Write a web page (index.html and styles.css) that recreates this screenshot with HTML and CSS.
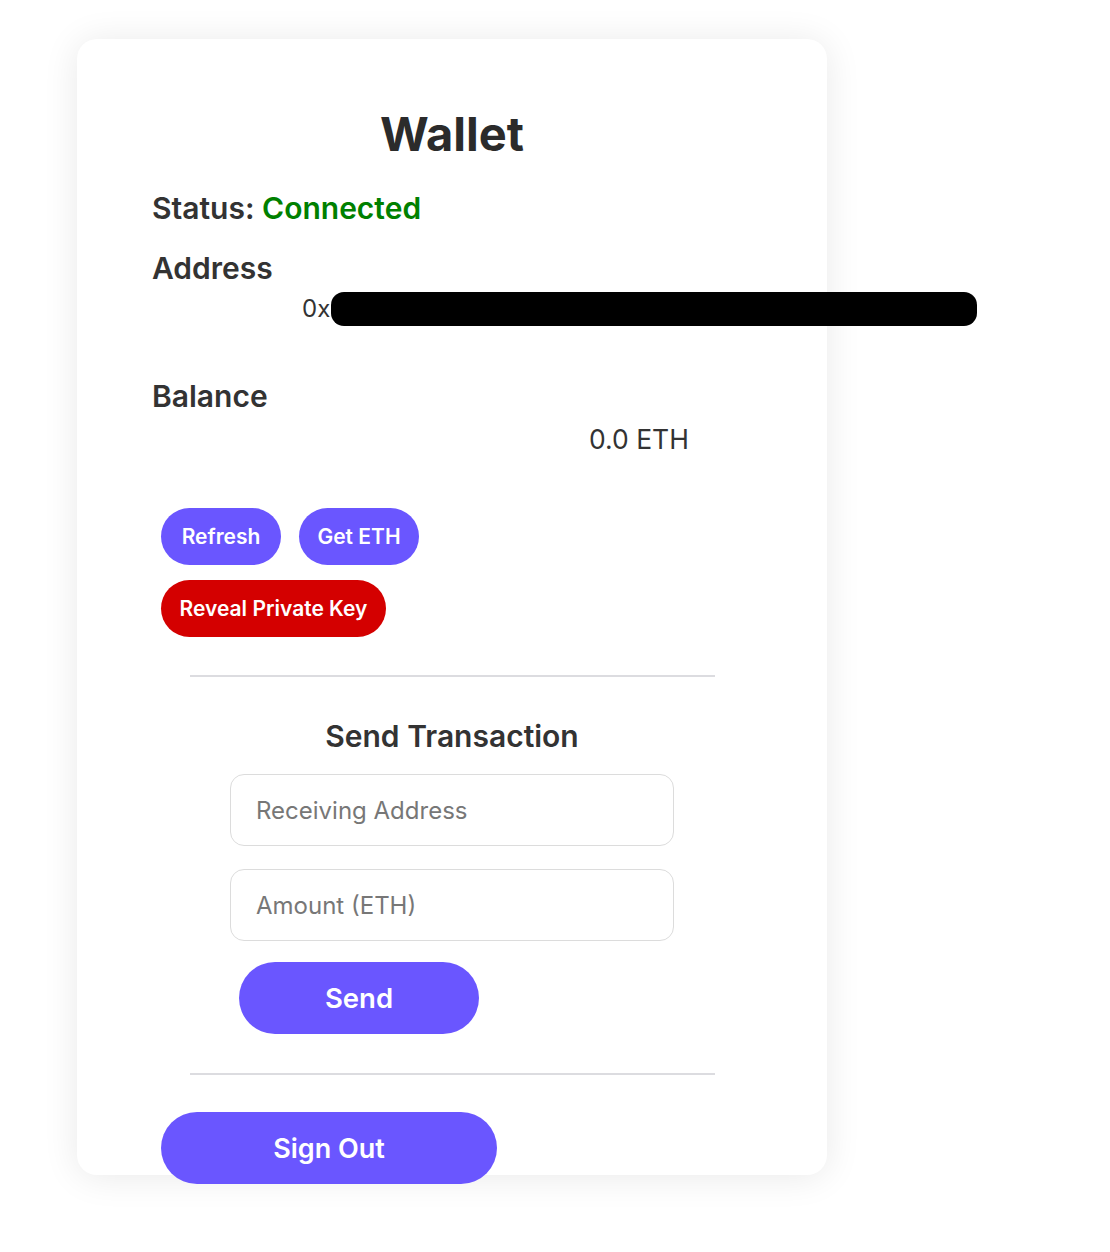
FILE: index.html
```html
<!DOCTYPE html>
<html>
<head>
<meta charset="utf-8">
<link rel="stylesheet" href="styles.css">
</head>
<body>
<div class="page">
  <div class="card">
    <h1 class="title">Wallet</h1>
    <div class="status">Status: <span class="ok">Connected</span></div>
    <h2 class="label">Address</h2>
    <div class="address">0x<span class="redact"></span></div>
    <h2 class="label balance-label">Balance</h2>
    <div class="balance">0.0 ETH</div>
    <div class="actions">
      <button class="pill">Refresh</button>
      <button class="pill">Get ETH</button>
    </div>
    <div class="actions second">
      <button class="pill danger">Reveal Private Key</button>
    </div>
    <hr class="rule">
    <h3 class="send-title">Send Transaction</h3>
    <div class="form">
      <input class="field" placeholder="Receiving Address">
      <input class="field" placeholder="Amount (ETH)">
    </div>
    <div class="send-row"><button class="big send">Send</button></div>
    <hr class="rule rule2">
    <button class="big signout">Sign Out</button>
  </div>
</div>
</body>
</html>
```
FILE: styles.css
```css
html, body { margin: 0; padding: 0; background: #fff; }
html { min-height: 100%; }
body { min-height: 1252px; font-family: Inter, "Noto Sans", sans-serif; color: #333; }
.page { padding: 39px 0 0 77px; }
.card {
  width: 750px; height: 1136px; box-sizing: border-box;
  background: #fff; border-radius: 20px;
  box-shadow: 0 2px 36px rgba(0,0,0,0.09);
  padding: 0 75px;
  display: flow-root;
  overflow: visible;
}
.title {
  margin: 0; padding-top: 67px; text-align: center;
  font-size: 47px; line-height: 56px; font-weight: 700; color: #2b2b2b;
}
.status { margin-top: 28px; font-size: 30px; line-height: 36px; font-weight: 600; }
.ok { color: #008000; }
.label { margin: 24px 0 0; font-size: 30px; line-height: 36px; font-weight: 600; }
.address { margin-top: 5px; padding-left: 150px; font-size: 24px; line-height: 36px; white-space: nowrap; display: flex; align-items: center; color: #333; }
.redact { display: inline-block; flex: 0 0 auto; width: 646px; height: 34px; background: #000; border-radius: 13px; margin-left: 1px; }
.balance-label { margin-top: 51px; }
.balance { margin-top: 9px; padding-left: 437px; font-size: 26.5px; line-height: 32px; }
.actions { display: flex; gap: 18px; padding-left: 9px; margin-top: 53px; }
.actions.second { margin-top: 15px; }
.pill {
  border: none; border-radius: 29px; height: 57px; width: 120px; padding: 0;
  background: #6a56ff; color: #fff; font-family: Inter, sans-serif;
  font-size: 21px; font-weight: 600;
}
.pill.danger { background: #d40000; width: 225px; }
.rule { margin: 38px 37px 0 38px; border: none; border-top: 2px solid #dcdce0; height: 0; }
.send-title { margin: 41px 0 0; text-align: center; font-size: 30px; line-height: 36px; font-weight: 600; }
.form { display: flex; flex-direction: column; align-items: center; gap: 23px; margin-top: 20px; }
.field {
  width: 444px; height: 72px; box-sizing: border-box; border: 1px solid #dcdcdc; border-radius: 14px;
  padding: 0 25px; font-family: Inter, sans-serif; font-size: 24px; color: #333; outline: none;
}
.field::placeholder { color: #777; }
.send-row { padding-left: 87px; margin-top: 21px; }
.big {
  border: none; border-radius: 36px; height: 72px; background: #6a56ff; color: #fff;
  font-family: Inter, sans-serif; font-weight: 600; font-size: 27.5px;
}
.send { width: 240px; }
.rule2 { margin-top: 39px; }
.signout { width: 336px; margin: 37px 0 0 9px; font-size: 27px; }
```
